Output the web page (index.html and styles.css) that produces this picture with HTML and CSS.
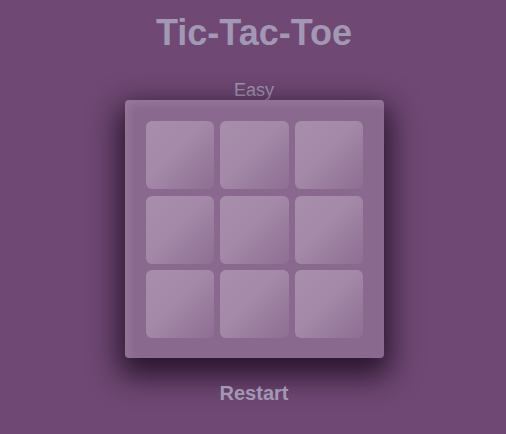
FILE: index.html
```html
<!DOCTYPE html>
<html>
<head>
<meta charset="utf-8">
<link rel="stylesheet" href="styles.css">
</head>
<body>
<div class="app">
  <h1 class="title">Tic-Tac-Toe</h1>
  <div class="level">Easy</div>
  <div class="board">
    <div class="cell"></div><div class="cell"></div><div class="cell"></div>
    <div class="cell"></div><div class="cell"></div><div class="cell"></div>
    <div class="cell"></div><div class="cell"></div><div class="cell"></div>
  </div>
  <div class="restart">Restart</div>
</div>
</body>
</html>
```
FILE: styles.css
```css
html, body {
  margin: 0;
  padding: 0;
  background: #6f4873;
  font-family: "Liberation Sans", Arial, sans-serif;
  width: 506px;
  height: 434px;
  overflow: hidden;
}
.app {
  display: flex;
  flex-direction: column;
  align-items: center;
  padding-left: 2px;
}
.title {
  margin: 13px 0 0;
  font-size: 36px;
  line-height: 40px;
  font-weight: bold;
  color: #a298b4;
}
.level {
  margin-top: 27px;
  font-size: 18px;
  line-height: 20px;
  color: #a298b4;
}
.board {
  box-sizing: border-box;
  width: 259px;
  height: 258px;
  padding: 21px 20px 20px 21px;
  display: grid;
  grid-template-columns: 68px 69px 68px;
  grid-template-rows: 68px 68px 68px;
  column-gap: 6px;
  row-gap: 6.5px;
  background: #8a698e;
  border-radius: 4px;
  box-shadow: 0 12px 30px 6px rgba(15, 3, 20, 0.75), inset 4px 4px 8px rgba(255, 255, 255, 0.1);
}
.cell {
  border-radius: 6px;
  background: linear-gradient(135deg, #a78eab 0%, #a48aa8 45%, #977a9c 75%, #8f6f94 100%);
}
.restart {
  margin-top: 23px;
  font-size: 20px;
  line-height: 24px;
  font-weight: bold;
  color: #a298b4;
}
```
